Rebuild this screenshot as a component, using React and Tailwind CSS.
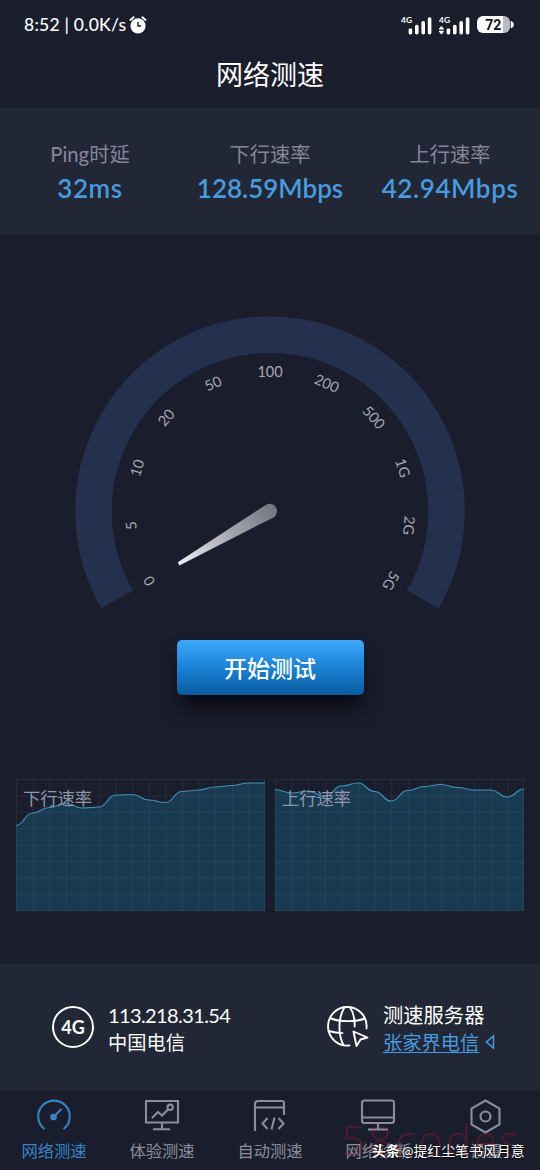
import React from 'react';

const STATS = [
    { label: 'Ping时延', value: '32ms', spacing: 'tracking-[0.6px]' },
    { label: '下行速率', value: '128.59Mbps', spacing: 'tracking-normal' },
    { label: '上行速率', value: '42.94Mbps', spacing: 'tracking-[0.6px]' },
];

// Dial labels, spread evenly from -120deg to 120deg
const DIAL = ['0', '5', '10', '20', '50', '100', '200', '500', '1G', '2G', '5G'];
const DIAL_STEP = 24;

const DOWNLOAD = [46.5, 34, 28.5, 24.5, 29, 28, 16, 15.5, 21, 23.5, 12.5, 11, 8, 6.5, 4, 4];
const UPLOAD = [10.5, 14, 12, 17.5, 7, 4, 12.5, 22, 11.5, 7.5, 5.5, 8.5, 11, 11, 18, 10];

const AlarmIcon = () => (
    <svg width="18" height="18" viewBox="0 0 18 18" fill="none">
        <circle cx="9" cy="9.8" r="7.6" fill="#fff" />
        <path d="M1.4 4 4.6 1.2M16.6 4l-3.2-2.8" stroke="#fff" strokeWidth="1.8" strokeLinecap="round" />
        <path d="M9 6v4h3" stroke="#1a1e2c" strokeWidth="1.4" />
    </svg>
);

const SignalIcon = ({ dots }) => (
    <svg width="34" height="20" viewBox="0 0 34 20" fill="#fff">
        <text x="0" y="7.5" fontSize="8" fontWeight="700" textLength="11" lengthAdjust="spacingAndGlyphs">4G</text>
        {dots && <path d="M0 14.6v-1l2.4-2.6 2.4 2.6v1zM0 15.8v1l2.4 2.6 2.4-2.6v-1z" />}
        <rect x="7.6" y="13.4" width="3.6" height="6" rx="1.4" />
        <rect x="14" y="9.8" width="3.6" height="9.6" rx="1.6" />
        <rect x="20.4" y="6" width="3.6" height="13.4" rx="1.6" />
        <rect x="26.8" y="2.2" width="3.6" height="17.2" rx="1.6" />
    </svg>
);

const BatteryIcon = () => (
    <svg width="37" height="18" viewBox="0 0 37 18">
        <path d="M6 0H27V17H6a6 6 0 0 1-6-6V6a6 6 0 0 1 6-6z" fill="#fff" />
        <path d="M26 0h1a6 6 0 0 1 6 6v5a6 6 0 0 1-6 6h-1z" fill="#b7bac0" />
        <path d="M34.2 5.3a3.6 3.6 0 0 1 0 6.6z" fill="#fff" stroke="#fff" />
        <text x="16.3" y="13.7" fontSize="14" fontWeight="700" textAnchor="middle" fill="#11141f" fontFamily="Roboto">72</text>
    </svg>
);

const Gauge = () => (
    <svg width="400" height="300" viewBox="70 312 400 300" className="block">
        <defs>
            <linearGradient id="needle" gradientUnits="userSpaceOnUse" x1="178" y1="564" x2="277" y2="511">
                <stop offset="0" stopColor="#eef0f8" />
                <stop offset="0.55" stopColor="#a3a5ae" />
                <stop offset="1" stopColor="#74767f" />
            </linearGradient>
        </defs>
        <path d="M117.1 599.3A176.500 176.500 0 1 1 422.900 599.3" fill="none" stroke="#24304d" strokeWidth="36.500" />
        {DIAL.map((label, i) => (
            <text
                key={label}
                x="270"
                y="376.5"
                fontSize="14.5"
                textAnchor="middle"
                fill="#a6a8b2"
                transform={`rotate(${(i - 5) * DIAL_STEP} 270 511)`}
            >
                {label}
            </text>
        ))}
        <path d="M177.8 562.3 266 504.8A7.3 7.3 0 1 1 273.4 517.4L179.4 565.6z" fill="url(#needle)" />
    </svg>
);

const buildLine = (points) => {
    const step = 249 / (points.length - 1);
    return points.reduce((d, y, i) => {
        if (i === 0) return `M0 ${y}`;
        const x = i * step;
        const mid = x - step / 2;
        return `${d}C${mid} ${points[i - 1]} ${mid} ${y} ${x} ${y}`;
    }, '');
};

const SpeedChart = ({ label, points }) => {
    const line = buildLine(points);
    return (
        <div className="relative h-[133px] w-[249px]">
            <svg width="249" height="133" viewBox="0 0 249 133" className="block">
                <path d={`${line}V132H0z`} fill="#193b52" />
                <g stroke="#5a7f96" strokeOpacity="0.15">
                    {Array.from({ length: 16 }, (_, i) => (
                        <path key={`v${i}`} d={`M${Math.min(i * 16.6 + 0.5, 248.5)} 0V132`} />
                    ))}
                    {Array.from({ length: 9 }, (_, i) => (
                        <path key={`h${i}`} d={`M0 ${i * 16.4 + 0.5}H249`} />
                    ))}
                </g>
                <path d={line} fill="none" stroke="#3d93bd" strokeWidth="1.2" />
            </svg>
            <span className="absolute left-[7px] top-2 text-[17.3px] leading-6 text-[#8e98a8]">{label}</span>
        </div>
    );
};

const GlobeIcon = () => (
    <svg width="42" height="42" viewBox="0 0 42 42" fill="none" stroke="#fff" strokeWidth="1.9" strokeLinecap="round" strokeLinejoin="round">
        <path d="M39.5 22.5A19.3 19.3 0 1 0 22.5 39.5" />
        <path d="M16.500 39C11.500 30 10.500 13 17 2.200M23.500 2.200c3.500 5 4.200 11 4.200 18.300" />
        <path d="M4 12.5c9 3.500 25 3.500 34 0M1.500 25c5 1.500 9 2.100 14 2.100" />
        <path d="M26.500 25.500 40.500 31.500 33.500 33.500 29.500 40z" />
    </svg>
);

const TABS = [
    {
        label: '网络测速',
        active: true,
        icon: (
            <>
                <path d="M8.5 31A15.8 15.8 0 1 1 27.5 31" />
                <path d="M18 18.500 25.500 11" />
                <circle cx="17.5" cy="19" r="2.3" fill="currentColor" />
            </>
        ),
    },
    {
        label: '体验测速',
        icon: (
            <>
                <path d="M2 3H34V24.5H2zM18 25v6M9 31.2H26" />
                <path d="M8 20 14 14 18 17.5 24 11.5" />
                <circle cx="26.2" cy="9.3" r="2.7" />
            </>
        ),
    },
    {
        label: '自动测速',
        icon: (
            <>
                <path d="M3 33V6Q3 3 6 3H30Q32 3 32 5V17M3 9.500H32" />
                <path d="M15.5 20 10.500 25.5 15.5 31M26.5 20 31.500 25.5 26.5 31M22.5 19.5 19.5 31.5" />
            </>
        ),
    },
    {
        label: '网络诊断',
        icon: (
            <>
                <rect x="2" y="2.5" width="32" height="22.5" rx="2.5" />
                <path d="M2 19.5H34M18 25.5v5.5M8 31.500H28" />
            </>
        ),
    },
    {
        label: '设置',
        icon: (
            <>
                <path d="M17.500 2.500 31.500 10.500V26.500L17.500 34.500 3.500 26.500V10.500z" />
                <circle cx="17.500" cy="18.500" r="5" />
            </>
        ),
    },
];

const TabBar = () => (
    <div className="relative grid h-20 grid-cols-5 bg-[#1a1e2c]">
        {TABS.map((tab) => (
            <div key={tab.label} className={`flex flex-col items-center pt-2 ${tab.active ? 'text-[#3484c8]' : 'text-[#8c8d9c]'}`}>
                <svg width="36" height="36" viewBox="0 0 36 36" fill="none" stroke="currentColor" strokeWidth="2.1">
                    {tab.icon}
                </svg>
                <span className="mt-[5px] text-[16.3px] leading-6">{tab.label}</span>
            </div>
        ))}
        <span className="absolute left-[341px] top-[22px] font-['Open_Sans'] text-[42px] font-light leading-[56px] tracking-[3px] text-[#c01830]/30">58codes</span>
        <span className="absolute left-[372px] top-[49px] whitespace-nowrap text-[13.9px] leading-6 text-white [text-shadow:0_1px_2px_#000]">
            <b className="font-bold">头条</b>
            <span className="ml-[2px]">@提红尘笔书风月意</span>
        </span>
    </div>
);

const App = () => {
    return (
        <div className="flex h-[1170px] w-[540px] flex-col overflow-hidden bg-[#1a1e2c] font-[Lato,'Noto_Sans_CJK_SC',sans-serif] text-white">
            <div className="flex h-12 items-center justify-between pl-6 pr-[26px] pt-[2px]">
                <div className="flex items-center gap-[3px] text-[17.5px] font-medium tracking-[0.25px]">
                    <span>8:52 | 0.0K/s</span>
                    <AlarmIcon />
                </div>
                <div className="flex items-center gap-1">
                    <SignalIcon />
                    <SignalIcon dots />
                    <BatteryIcon />
                </div>
            </div>
            <h1 className="h-[60px] pt-[9px] text-center text-[27px] leading-9">网络测速</h1>

            <div className="grid h-[126px] grid-cols-3 bg-[#222735] pt-8 text-center">
                {STATS.map((stat) => (
                    <div key={stat.label}>
                        <div className="text-[20.3px] leading-7 text-[#84869a]">{stat.label}</div>
                        <div className={`mt-1 text-[26px] font-semibold leading-8 text-[#479bdf] ${stat.spacing}`}>{stat.value}</div>
                    </div>
                ))}
            </div>

            <div className="flex flex-col items-center pt-[78px]">
                <Gauge />
                <button className="mt-7 h-[55px] w-[187px] rounded-[5px] bg-linear-to-b from-[#3aa8fb] via-[#1b83d7] to-[#075c9f] pt-[2px] text-[23px] font-medium shadow-[0_14px_20px_-4px_#05070c]">
                    开始测试
                </button>
            </div>

            <div className="mt-[84px] flex gap-[10px] px-4">
                <SpeedChart label="下行速率" points={DOWNLOAD} />
                <SpeedChart label="上行速率" points={UPLOAD} />
            </div>

            <div className="mt-[52px] grid h-[126px] grid-cols-2 bg-[#222735] text-xl leading-[27px]">
                <div className="flex items-center gap-[14px] pl-[52px]">
                    <div className="flex size-[42px] items-center justify-center rounded-full border-2 border-white text-lg font-bold">4G</div>
                    <div className="pt-[3px]">
                        <div className="tracking-[-0.6px]">113.218.31.54</div>
                        <div className="text-[19.3px]">中国电信</div>
                    </div>
                </div>
                <div className="flex items-center gap-[14px] pl-[57px]">
                    <GlobeIcon />
                    <div className="pt-[3px]">
                        <div className="text-[20.3px]">测速服务器</div>
                        <div className="flex items-center gap-[6px] text-[19.3px] text-[#479bdf]">
                            <span className="underline underline-offset-2">张家界电信</span>
                            <svg width="10" height="16" viewBox="0 0 10 16" fill="none" stroke="currentColor" strokeWidth="1.5">
                                <path d="M8.500 2V14L1.500 8z" />
                            </svg>
                        </div>
                    </div>
                </div>
            </div>
            <TabBar />
        </div>
    );
};

export default App;
